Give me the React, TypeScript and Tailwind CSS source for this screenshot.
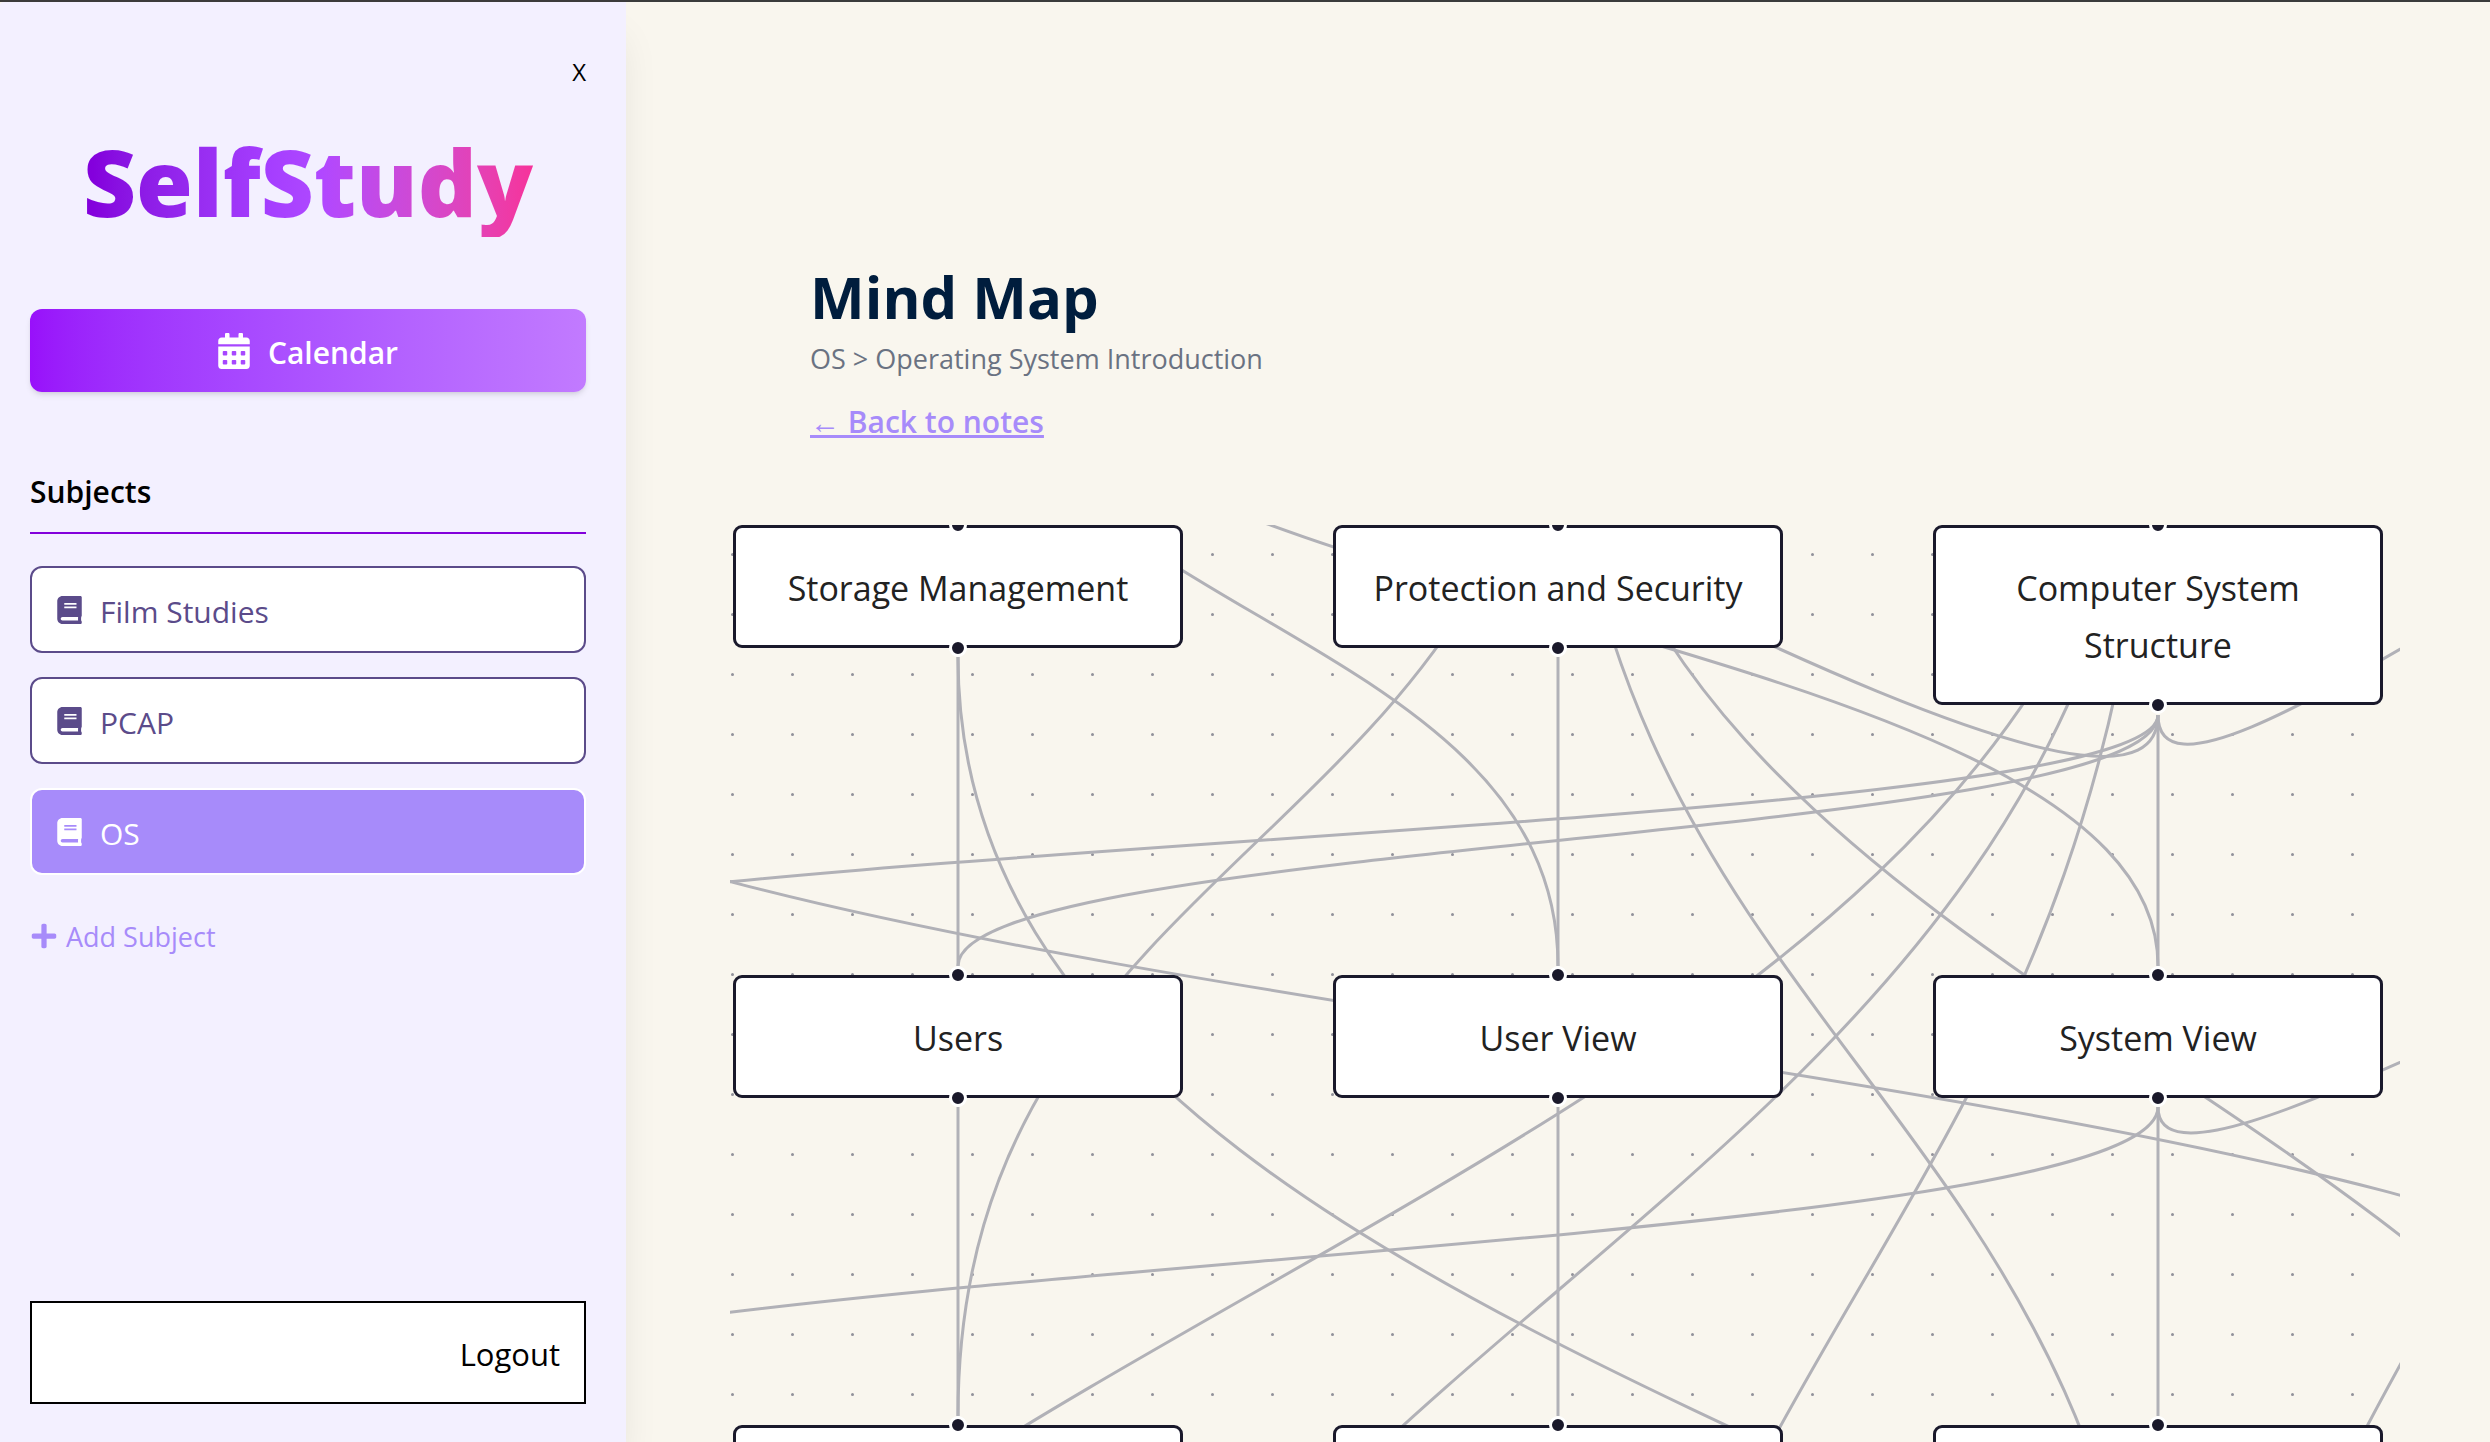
import { FaBook, FaCalendarAlt, FaPlus } from "react-icons/fa";

type MapNode = { id: string; label: string; x: number; y: number };
type Edge = { from: [number, number]; to: [number, number] };

const subjects = [
  { name: "Film Studies", active: false },
  { name: "PCAP", active: false },
  { name: "OS", active: true },
];

// Node positions on the canvas, measured from its top left corner.
const nodes: MapNode[] = [
  { id: "storage", label: "Storage Management", x: 3, y: 0 },
  { id: "protection", label: "Protection and Security", x: 603, y: 0 },
  { id: "structure", label: "Computer System Structure", x: 1203, y: 0 },
  { id: "users", label: "Users", x: 3, y: 450 },
  { id: "user-view", label: "User View", x: 603, y: 450 },
  { id: "system-view", label: "System View", x: 1203, y: 450 },
  { id: "row3-a", label: "", x: 3, y: 900 },
  { id: "row3-b", label: "", x: 603, y: 900 },
  { id: "row3-c", label: "", x: 1203, y: 900 },
];

const edges: Edge[] = [
  { from: [228, 132], to: [228, 441] },
  { from: [828, 132], to: [828, 441] },
  { from: [1428, 190], to: [1428, 441] },
  { from: [228, 582], to: [228, 891] },
  { from: [828, 582], to: [828, 891] },
  { from: [1428, 582], to: [1428, 891] },
  { from: [1428, 190], to: [228, 441] },
  { from: [1428, 190], to: [-372, 441] },
  { from: [1428, 190], to: [-372, -459] },
  { from: [1428, 190], to: [2028, -9] },
  { from: [1428, 582], to: [2028, 441] },
  { from: [1428, 582], to: [-372, 891] },
  { from: [228, 132], to: [2028, 1791] },
  { from: [-372, 132], to: [2028, 891] },
  { from: [228, -260], to: [828, 441] },
  { from: [228, -260], to: [1428, 441] },
  { from: [828, -260], to: [228, 891] },
  { from: [828, -260], to: [1428, 1341] },
  { from: [828, -260], to: [2028, 1341] },
  { from: [1428, -260], to: [-372, 1791] },
  { from: [1428, -260], to: [228, 1791] },
  { from: [1428, -260], to: [828, 1791] },
  { from: [2028, -318], to: [1428, 1791] },
];

const ZOOM = 3;

function edgePath({ from: [sx, sy], to: [tx, ty] }: Edge) {
  const distance = ty - sy;
  const bend =
    distance >= 0 ? distance / 2 : 6.25 * Math.sqrt(-distance / ZOOM) * ZOOM;
  return `M${sx},${sy} C${sx},${sy + bend} ${tx},${ty - bend} ${tx},${ty}`;
}

function Handle({ side }: { side: "top" | "bottom" }) {
  return (
    <span
      className={
        "absolute left-1/2 size-[18px] -translate-x-1/2 rounded-full border-[3px] border-white bg-[#1a192b] " +
        (side === "top" ? "-top-3" : "-bottom-3")
      }
    />
  );
}

function Sidebar() {
  return (
    <aside className="z-10 flex w-[626px] shrink-0 flex-col rounded-tl bg-[#f3f0ff] pb-[38px] pl-[30px] pr-10 pt-[54px] shadow-[0_30px_38px_-8px_rgba(0,0,0,0.1)]">
      <button type="button" className="self-end text-2xl leading-8 text-black">
        X
      </button>
      <h1 className="mt-[54px] self-center bg-linear-to-r from-purple-700 via-purple-500 to-pink-500 bg-clip-text pb-[15px] text-[92px] font-black leading-[80px] text-transparent">
        SelfStudy
      </h1>
      <button
        type="button"
        className="mt-[72px] flex h-[83px] shrink-0 items-center justify-center gap-[18px] rounded-xl bg-linear-to-r from-purple-600 to-purple-400 text-[30px] font-semibold text-white shadow-md"
      >
        <FaCalendarAlt className="h-9 w-8" />
        <span className="pt-1">Calendar</span>
      </button>

      <h2 className="mt-[78px] border-b-2 border-purple-700 pb-[18px] text-[30px] font-semibold leading-[44px] text-black">
        Subjects
      </h2>
      <ul className="mt-8 flex flex-col gap-6">
        {subjects.map((s) => (
          <li key={s.name}>
            <button
              type="button"
              className={
                "flex h-[87px] w-full items-center gap-[18px] rounded-xl border-2 px-[25px] text-[30px] " +
                (s.active
                  ? "border-white bg-[#a78bfa] text-white"
                  : "border-[#5b4b8a] bg-white text-[#5b4b8a]")
              }
            >
              <FaBook className="h-7 w-[25px]" />
              <span className="pt-1">{s.name}</span>
            </button>
          </li>
        ))}
      </ul>
      <button
        type="button"
        className="mt-10 flex items-center gap-2 self-start text-[27px] leading-10 text-[#a78bfa]"
      >
        <FaPlus className="size-7" />
        <span className="pt-0.5">Add Subject</span>
      </button>

      <button
        type="button"
        className="mt-auto h-[103px] border-2 border-black bg-white px-6 pt-1 text-right text-[31px] text-black"
      >
        Logout
      </button>
    </aside>
  );
}

function MindMap() {
  return (
    <div className="relative flex-1 overflow-hidden">
      <svg className="absolute inset-0 size-full" aria-hidden="true">
        <defs>
          <pattern id="dots" width="60" height="60" patternUnits="userSpaceOnUse">
            <circle cx="2.5" cy="29.5" r="1.5" fill="#91919a" />
          </pattern>
        </defs>
        <rect width="100%" height="100%" fill="url(#dots)" />
        <g fill="none" stroke="#b1b1b7" strokeWidth="3">
          {edges.map((e, i) => (
            <path key={i} d={edgePath(e)} />
          ))}
        </g>
      </svg>
      {nodes.map((n) => (
        <div
          key={n.id}
          className="absolute min-h-[123px] w-[450px] rounded-[9px] border-[3px] border-[#1a192b] bg-white px-[30px] pb-7 pt-8 text-center text-[34px] leading-[57px] text-[#222]"
          style={{ left: n.x, top: n.y }}
        >
          {n.label}
          <Handle side="top" />
          <Handle side="bottom" />
        </div>
      ))}
    </div>
  );
}

export default function App() {
  return (
    <div className="flex h-screen overflow-hidden border-t-2 border-[#3b3b3b] bg-[#f9f6ee] font-['Open_Sans','Noto_Sans',sans-serif]">
      <Sidebar />
      <main className="flex min-w-0 flex-1 flex-col pl-[104px] pr-[90px]">
        <header className="px-20 pb-20 pt-64">
          <h1 className="text-[58px] font-bold leading-[78px] text-[#001d3d]">
            Mind Map
          </h1>
          <p className="pt-[3px] text-[27px] leading-10 text-gray-500">
            OS &gt; Operating System Introduction
          </p>
          <a
            href="#notes"
            className="mt-5 inline-block text-[30px] font-semibold leading-[46px] text-[#a78bfa] underline"
          >
            ← Back to notes
          </a>
        </header>
        <MindMap />
      </main>
    </div>
  );
}
